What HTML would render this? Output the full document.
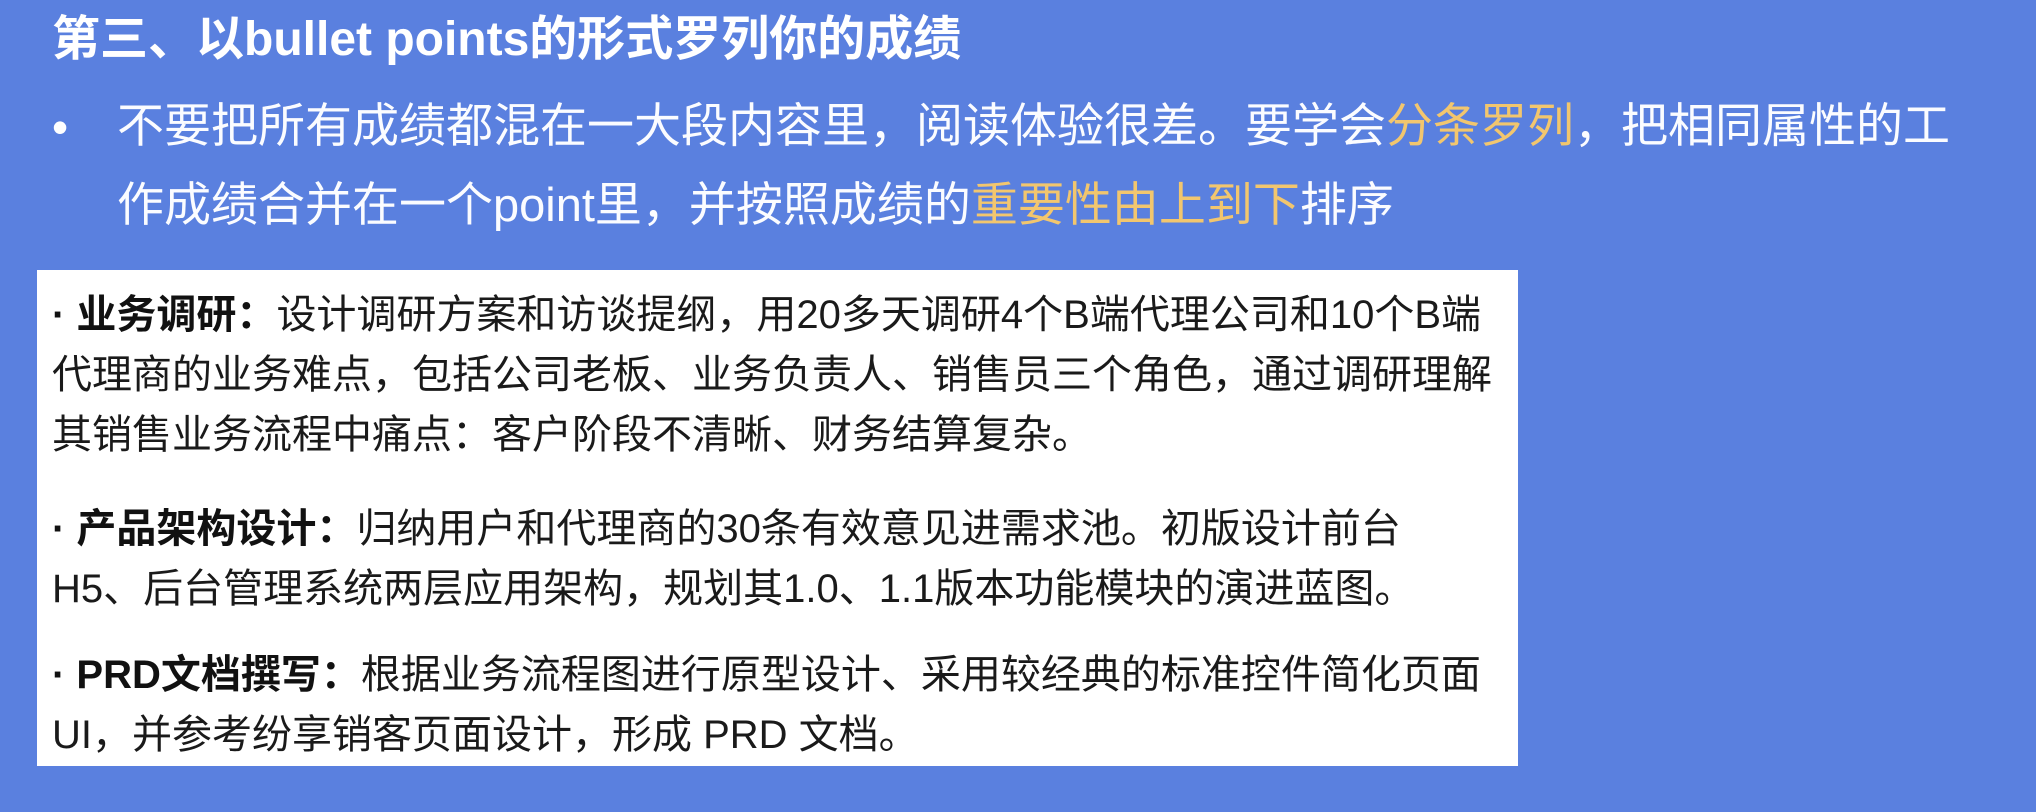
<!DOCTYPE html>
<html><head><meta charset="utf-8"><style>
html,body{margin:0;padding:0;}
body{width:2036px;height:812px;overflow:hidden;background:#5a80df;position:relative;font-family:"Liberation Sans","Noto Sans CJK SC",sans-serif;}
.t{position:absolute;left:52px;top:10px;font-size:48px;font-weight:bold;color:#fff;white-space:nowrap;line-height:60px;}
.dot{position:absolute;left:52px;top:100px;font-size:46px;color:#fff;}
.b{position:absolute;left:117px;top:86px;font-size:47px;color:#fbfcff;line-height:79px;white-space:nowrap;}
.y{color:#f2c66e;}
.box{position:absolute;left:37px;top:270px;width:1481px;height:496px;background:#fff;}
.box p{margin:0;position:absolute;left:15px;font-size:40px;line-height:60px;color:#1a1a1a;white-space:nowrap;}
.box b{color:#111;}
</style></head><body>
<div class="t">第三、以bullet points的形式罗列你的成绩</div>
<div class="dot">•</div>
<div class="b">不要把所有成绩都混在一大段内容里，阅读体验很差。要学会<span class="y">分条罗列</span>，把相同属性的工<br>作成绩合并在一个point里，并按照成绩的<span class="y">重要性由上到下</span>排序</div>
<div class="box">
<p style="top:15px"><b>· 业务调研：</b>设计调研方案和访谈提纲，用20多天调研4个B端代理公司和10个B端<br>代理商的业务难点，包括公司老板、业务负责人、销售员三个角色，通过调研理解<br>其销售业务流程中痛点：客户阶段不清晰、财务结算复杂。</p>
<p style="top:229px"><b>· 产品架构设计：</b>归纳用户和代理商的30条有效意见进需求池。初版设计前台<br>H5、后台管理系统两层应用架构，规划其1.0、1.1版本功能模块的演进蓝图。</p>
<p style="top:375px"><b>· PRD文档撰写：</b>根据业务流程图进行原型设计、采用较经典的标准控件简化页面<br>UI，并参考纷享销客页面设计，形成 PRD 文档。</p>
</div>
</body></html>
